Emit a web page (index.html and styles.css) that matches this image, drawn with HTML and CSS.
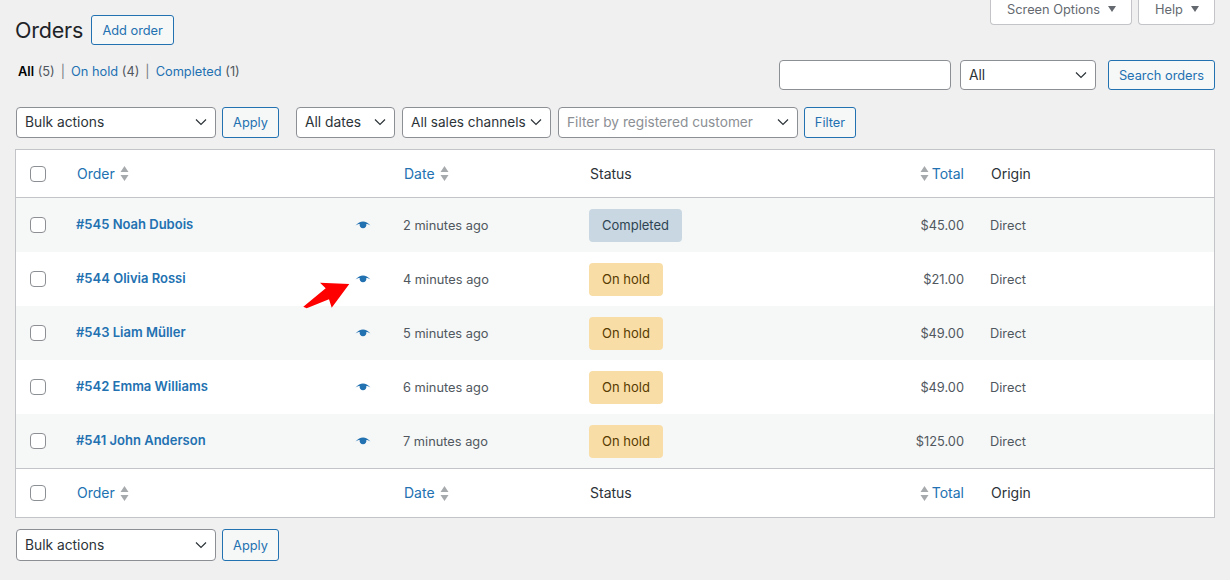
FILE: index.html
```html
<!DOCTYPE html>
<html lang="en">
<head>
<meta charset="utf-8">
<title>Orders</title>
<link rel="stylesheet" href="styles.css">
</head>
<body>
<div class="screen-meta">
  <button class="tab">Screen Options <span class="tri"></span></button>
  <button class="tab">Help <span class="tri"></span></button>
</div>
<div class="wrap">
  <div class="title-row">
    <h1>Orders</h1>
    <a class="btn add">Add order</a>
  </div>
  <div class="sub-search">
    <ul class="subsub">
      <li><b>All</b> <span class="n">(5)</span></li>
      <li class="sep">|</li>
      <li><a>On hold</a> <span class="n">(4)</span></li>
      <li class="sep">|</li>
      <li><a>Completed</a> <span class="n">(1)</span></li>
    </ul>
    <div class="search">
      <input class="field s-input" type="text">
      <div class="field sel s-sel">All<svg class="chev" viewBox="0 0 12 8"><path d="M1 1.5 6 6.5 11 1.5"/></svg></div>
      <a class="btn s-btn">Search orders</a>
    </div>
  </div>
  <div class="nav">
    <div class="field sel bulk">Bulk actions<svg class="chev" viewBox="0 0 12 8"><path d="M1 1.5 6 6.5 11 1.5"/></svg></div>
    <a class="btn apply">Apply</a>
    <div class="field sel dates">All dates<svg class="chev" viewBox="0 0 12 8"><path d="M1 1.5 6 6.5 11 1.5"/></svg></div>
    <div class="field sel channels">All sales channels<svg class="chev" viewBox="0 0 12 8"><path d="M1 1.5 6 6.5 11 1.5"/></svg></div>
    <div class="field sel customer">Filter by registered customer<svg class="chev" viewBox="0 0 12 8"><path d="M1 1.5 6 6.5 11 1.5"/></svg></div>
    <a class="btn filter">Filter</a>
  </div>

  <div class="table">
    <div class="row head">
      <div class="c-cb"><span class="cb"></span></div>
      <div class="c-order"><a>Order</a><svg class="sort" viewBox="0 0 8 15"><path d="M4 0 8 6H0ZM4 15 0 9H8Z"/></svg></div>
      <div class="c-date"><a>Date</a><svg class="sort" viewBox="0 0 8 15"><path d="M4 0 8 6H0ZM4 15 0 9H8Z"/></svg></div>
      <div class="c-status">Status</div>
      <div class="c-total"><svg class="sort left" viewBox="0 0 8 15"><path d="M4 0 8 6H0ZM4 15 0 9H8Z"/></svg><a>Total</a></div>
      <div class="c-origin">Origin</div>
    </div>

    <div class="row item alt">
      <div class="c-cb"><span class="cb"></span></div>
      <div class="c-order"><a class="name">#545 Noah Dubois</a><svg class="eye" viewBox="0 0 16 10"><path d="M0.5 4.6C3 1.5 5.400 0.500 8 0.500s5 1 7.500 4.100C13.500 3.400 12.200 3 11.300 3a3.400 3.400 0 1 1-6.600 0C3.800 3 2.500 3.400 0.500 4.600Z"/></svg></div>
      <div class="c-date">2 minutes ago</div>
      <div class="c-status"><span class="badge done">Completed</span></div>
      <div class="c-total">$45.00</div>
      <div class="c-origin">Direct</div>
    </div>
    <div class="row item">
      <div class="c-cb"><span class="cb"></span></div>
      <div class="c-order"><a class="name">#544 Olivia Rossi</a><svg class="eye" viewBox="0 0 16 10"><path d="M0.5 4.6C3 1.5 5.400 0.500 8 0.500s5 1 7.500 4.100C13.500 3.400 12.200 3 11.300 3a3.400 3.400 0 1 1-6.600 0C3.800 3 2.500 3.400 0.500 4.600Z"/></svg></div>
      <div class="c-date">4 minutes ago</div>
      <div class="c-status"><span class="badge hold">On hold</span></div>
      <div class="c-total">$21.00</div>
      <div class="c-origin">Direct</div>
    </div>
    <div class="row item alt">
      <div class="c-cb"><span class="cb"></span></div>
      <div class="c-order"><a class="name">#543 Liam Müller</a><svg class="eye" viewBox="0 0 16 10"><path d="M0.5 4.6C3 1.5 5.400 0.500 8 0.500s5 1 7.500 4.100C13.500 3.400 12.200 3 11.300 3a3.400 3.400 0 1 1-6.600 0C3.800 3 2.500 3.400 0.500 4.600Z"/></svg></div>
      <div class="c-date">5 minutes ago</div>
      <div class="c-status"><span class="badge hold">On hold</span></div>
      <div class="c-total">$49.00</div>
      <div class="c-origin">Direct</div>
    </div>
    <div class="row item">
      <div class="c-cb"><span class="cb"></span></div>
      <div class="c-order"><a class="name">#542 Emma Williams</a><svg class="eye" viewBox="0 0 16 10"><path d="M0.5 4.6C3 1.5 5.400 0.500 8 0.500s5 1 7.500 4.100C13.500 3.400 12.200 3 11.300 3a3.400 3.400 0 1 1-6.600 0C3.800 3 2.500 3.400 0.500 4.600Z"/></svg></div>
      <div class="c-date">6 minutes ago</div>
      <div class="c-status"><span class="badge hold">On hold</span></div>
      <div class="c-total">$49.00</div>
      <div class="c-origin">Direct</div>
    </div>
    <div class="row item alt">
      <div class="c-cb"><span class="cb"></span></div>
      <div class="c-order"><a class="name">#541 John Anderson</a><svg class="eye" viewBox="0 0 16 10"><path d="M0.5 4.6C3 1.5 5.400 0.500 8 0.500s5 1 7.500 4.100C13.500 3.400 12.200 3 11.300 3a3.400 3.400 0 1 1-6.600 0C3.800 3 2.500 3.400 0.500 4.600Z"/></svg></div>
      <div class="c-date">7 minutes ago</div>
      <div class="c-status"><span class="badge hold">On hold</span></div>
      <div class="c-total">$125.00</div>
      <div class="c-origin">Direct</div>
    </div>

    <div class="row head foot">
      <div class="c-cb"><span class="cb"></span></div>
      <div class="c-order"><a>Order</a><svg class="sort" viewBox="0 0 8 15"><path d="M4 0 8 6H0ZM4 15 0 9H8Z"/></svg></div>
      <div class="c-date"><a>Date</a><svg class="sort" viewBox="0 0 8 15"><path d="M4 0 8 6H0ZM4 15 0 9H8Z"/></svg></div>
      <div class="c-status">Status</div>
      <div class="c-total"><svg class="sort left" viewBox="0 0 8 15"><path d="M4 0 8 6H0ZM4 15 0 9H8Z"/></svg><a>Total</a></div>
      <div class="c-origin">Origin</div>
    </div>
    <svg class="arrow" viewBox="0 0 50 30"><path d="M47.300 3 18 1.700 23.700 7.300 1.300 25.700 4.700 27.300 27 18.300 29.700 26.700Z"/></svg>
  </div>

  <div class="nav bottom">
    <div class="field sel bulk">Bulk actions<svg class="chev" viewBox="0 0 12 8"><path d="M1 1.5 6 6.5 11 1.5"/></svg></div>
    <a class="btn apply">Apply</a>
  </div>
</div>
</body>
</html>
```
FILE: styles.css
```css
* { box-sizing: border-box; }
html, body { margin: 0; height: 580px; overflow: hidden; }
body {
  background: #f0f0f1;
  color: #2c3338;
  font: 13px/1.4 Inter, "Liberation Sans", sans-serif;
  position: relative;
}
a { color: #2271b1; text-decoration: none; }

.screen-meta {
  display: flex;
  justify-content: flex-end;
  gap: 6px;
  padding-right: 15px;
  height: 0;
}
.tab {
  height: 25px;
  margin: 0;
  background: #fff;
  border: 1px solid #c3c4c7;
  border-top: 0;
  border-radius: 0 0 4px 4px;
  color: #646970;
  font: 12.8px Inter, "Liberation Sans", sans-serif;
  padding: 0 0 6px 16px;
  text-align: left;
}
.tab:first-child { width: 142px; }
.tab:last-child { width: 77px; }
.tri {
  display: inline-block;
  width: 0; height: 0;
  margin-left: 4px;
  vertical-align: 2px;
  border: 4px solid transparent;
  border-top: 6px solid #646970;
  border-bottom: 0;
}

.wrap { padding: 15px 15px 0; }

.title-row { display: flex; align-items: center; gap: 8px; height: 30px; }
h1 { margin: 0; font-size: 21.5px; font-weight: 400; color: #1d2327; line-height: 30px; letter-spacing: -.2px; }

.btn {
  display: inline-flex;
  align-items: center;
  justify-content: center;
  background: #f6f7f7;
  border: 1px solid #2271b1;
  border-radius: 3px;
  color: #2271b1;
  flex: none;
  font-size: 12.8px;
  padding-top: 2px;
}
.add { width: 83px; height: 30px; }

.sub-search {
  display: flex;
  justify-content: space-between;
  align-items: flex-start;
  margin-top: 15px;
  height: 48px;
}
.subsub {
  list-style: none;
  display: flex;
  gap: 6px;
  margin: 3px 0 0;
  padding: 0 0 0 3px;
  font-size: 12.8px;
  line-height: 18px;
}
.subsub b { color: #000; font-weight: 600; }
.subsub .n { color: #50575e; }
.subsub .sep { color: #787c82; }
.search { display: flex; }

.field {
  background: #fff;
  border: 1px solid #8c8f94;
  border-radius: 4px;
  height: 30px;
  color: #2c3338;
  font-size: 13.8px;
  flex: none;
}
.sel {
  display: flex;
  align-items: center;
  justify-content: space-between;
  padding: 2px 8px 0 8px;
}
.chev { width: 12px; height: 8px; fill: none; stroke: #2c3338; stroke-width: 1.2; flex: none; margin-top: -2px; }
.s-input { width: 172px; }
.s-sel { width: 136px; margin-left: 9px; }
.s-btn { width: 107px; height: 30px; margin-left: 12px; }

.nav { display: flex; align-items: center; height: 32px; margin-top: -2px; }
.nav .field { height: 31px; }
.bulk { width: 200px; margin-left: 1px; }
.apply { width: 57px; height: 31px; margin-left: 6px; }
.dates { width: 99px; margin-left: 17px; }
.channels { width: 149px; margin-left: 7px; font-size: 13.6px; }
.customer { width: 240px; margin-left: 7px; color: #8c8f94; font-size: 13.7px; }
.filter { width: 52px; height: 31px; margin-left: 6px; }

.table {
  position: relative;
  margin-top: 11px;
  width: 1200px;
  background: #fff;
  border: 1px solid #c3c4c7;
}
.row {
  display: grid;
  grid-template-columns: 50px 327px 187px 296px 88px 1fr;
  align-items: center;
  height: 54px;
}
.row > div { display: flex; align-items: center; min-width: 0; }
.head { height: 48px; border-bottom: 1px solid #c3c4c7; font-size: 14px; color: #2c3338; }
.foot { height: 49px; border-bottom: 0; border-top: 1px solid #c3c4c7; }
.alt { background: #f6f7f7; }
.item { color: #50575e; font-size: 12.8px; }
.item .c-date, .item .c-total, .item .c-origin { padding-top: 2px; }

.c-cb { padding-left: 14px; }
.cb {
  width: 16px; height: 16px;
  background: #fff;
  border: 1px solid #8c8f94;
  border-radius: 4px;
  display: block;
}
.c-order { padding-left: 10px; padding-right: 22px; justify-content: flex-start; }
.head .c-order { padding-left: 11px; }
.item .c-order { justify-content: space-between; }
.name { font-weight: 600; font-size: 13px; margin-bottom: 2px; }
.sort { width: 9px; height: 15px; fill: #a7aaad; margin-left: 5px; flex: none; }
.sort.left { margin: 0 3px 0 0; }
.c-date { padding-left: 10px; }
.head .c-date { padding-left: 11px; }
.c-status { padding-left: 9px; }
.head .c-status { padding-left: 10px; }
.c-total { justify-content: flex-end; padding-right: 0; }
.c-origin { padding-left: 26px; }
.head .c-origin { padding-left: 27px; }

.badge {
  display: inline-block;
  height: 33px;
  line-height: 33px;
  padding: 0 13px;
  border-radius: 4px;
  font-size: 13px;
}
.done { background: #c8d7e1; color: #2e4453; }
.hold { background: #f8dda7; color: #573b00; }

.eye { width: 16px; height: 10px; fill: #2271b1; flex: none; margin-top: 1px; }

.arrow {
  position: absolute;
  left: 286px;
  top: 131px;
  width: 50px;
  height: 30px;
  fill: #ff0000;
}

.bottom { margin-top: 11px; }
.bottom .field, .bottom .btn { height: 32px; }
```
